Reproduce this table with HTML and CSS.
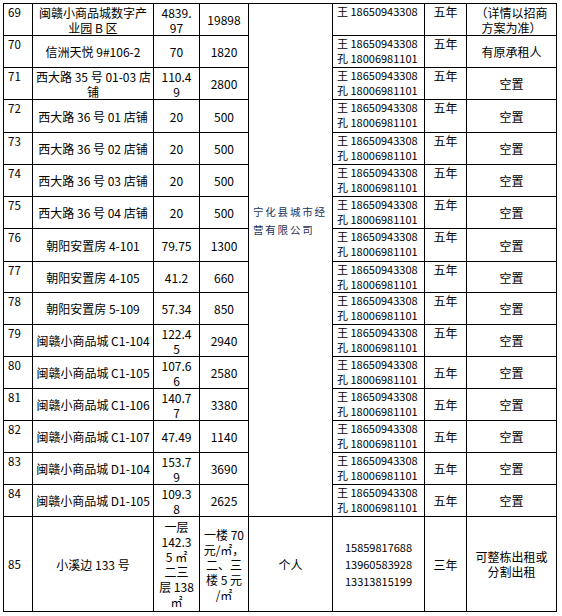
FILE: index.html
```html
<!DOCTYPE html>
<html lang="zh-CN">
<head>
<meta charset="utf-8">
<title>招商表</title>
<link rel="stylesheet" href="styles.css">
</head>
<body>
<table class="sheet">
  <colgroup>
    <col class="c-no"><col class="c-name"><col class="c-area"><col class="c-rent"><col class="c-owner"><col class="c-tel"><col class="c-term"><col class="c-note">
  </colgroup>
  <tbody>
    <tr>
      <td class="no">69</td><td class="ctr">闽赣小商品城数字产<br>业园 B 区</td><td class="ctr">4839.<br>97</td><td class="ctr">19898</td>
      <td class="owner" rowspan="16">宁化县城市经营有限公司</td>
      <td class="tel top">王 18650943308</td><td class="term top">五年</td><td class="ctr">（详情以招商<br>方案为准）</td>
    </tr>
    <tr>
      <td class="no">70</td><td class="ctr">信洲天悦 9#106-2</td><td class="ctr">70</td><td class="ctr">1820</td>
      <td class="tel">王 18650943308<br>孔 18006981101</td><td class="term top">五年</td><td class="ctr">有原承租人</td>
    </tr>
    <tr>
      <td class="no">71</td><td class="ctr">西大路 35 号 01-03 店<br>铺</td><td class="ctr">110.4<br>9</td><td class="ctr">2800</td>
      <td class="tel">王 18650943308<br>孔 18006981101</td><td class="term top">五年</td><td class="ctr">空置</td>
    </tr>
    <tr class="r33">
      <td class="no">72</td><td class="ctr">西大路 36 号 01 店铺</td><td class="ctr">20</td><td class="ctr">500</td>
      <td class="tel">王 18650943308<br>孔 18006981101</td><td class="term top">五年</td><td class="ctr">空置</td>
    </tr>
    <tr>
      <td class="no">73</td><td class="ctr">西大路 36 号 02 店铺</td><td class="ctr">20</td><td class="ctr">500</td>
      <td class="tel">王 18650943308<br>孔 18006981101</td><td class="term top">五年</td><td class="ctr">空置</td>
    </tr>
    <tr>
      <td class="no">74</td><td class="ctr">西大路 36 号 03 店铺</td><td class="ctr">20</td><td class="ctr">500</td>
      <td class="tel">王 18650943308<br>孔 18006981101</td><td class="term top">五年</td><td class="ctr">空置</td>
    </tr>
    <tr>
      <td class="no">75</td><td class="ctr">西大路 36 号 04 店铺</td><td class="ctr">20</td><td class="ctr">500</td>
      <td class="tel">王 18650943308<br>孔 18006981101</td><td class="term top">五年</td><td class="ctr">空置</td>
    </tr>
    <tr class="r33">
      <td class="no">76</td><td class="ctr">朝阳安置房 4-101</td><td class="ctr">79.75</td><td class="ctr">1300</td>
      <td class="tel">王 18650943308<br>孔 18006981101</td><td class="term top">五年</td><td class="ctr">空置</td>
    </tr>
    <tr class="r31">
      <td class="no">77</td><td class="ctr">朝阳安置房 4-105</td><td class="ctr">41.2</td><td class="ctr">660</td>
      <td class="tel">王 18650943308<br>孔 18006981101</td><td class="term top">五年</td><td class="ctr">空置</td>
    </tr>
    <tr>
      <td class="no">78</td><td class="ctr">朝阳安置房 5-109</td><td class="ctr">57.34</td><td class="ctr">850</td>
      <td class="tel">王 18650943308<br>孔 18006981101</td><td class="term top">五年</td><td class="ctr">空置</td>
    </tr>
    <tr>
      <td class="no">79</td><td class="ctr">闽赣小商品城 C1-104</td><td class="ctr">122.4<br>5</td><td class="ctr">2940</td>
      <td class="tel">王 18650943308<br>孔 18006981101</td><td class="term top">五年</td><td class="ctr">空置</td>
    </tr>
    <tr>
      <td class="no">80</td><td class="ctr">闽赣小商品城 C1-105</td><td class="ctr">107.6<br>6</td><td class="ctr">2580</td>
      <td class="tel">王 18650943308<br>孔 18006981101</td><td class="term">五年</td><td class="ctr">空置</td>
    </tr>
    <tr>
      <td class="no">81</td><td class="ctr">闽赣小商品城 C1-106</td><td class="ctr">140.7<br>7</td><td class="ctr">3380</td>
      <td class="tel">王 18650943308<br>孔 18006981101</td><td class="term">五年</td><td class="ctr">空置</td>
    </tr>
    <tr>
      <td class="no">82</td><td class="ctr">闽赣小商品城 C1-107</td><td class="ctr">47.49</td><td class="ctr">1140</td>
      <td class="tel">王 18650943308<br>孔 18006981101</td><td class="term">五年</td><td class="ctr">空置</td>
    </tr>
    <tr>
      <td class="no">83</td><td class="ctr">闽赣小商品城 D1-104</td><td class="ctr">153.7<br>9</td><td class="ctr">3690</td>
      <td class="tel">王 18650943308<br>孔 18006981101</td><td class="term">五年</td><td class="ctr">空置</td>
    </tr>
    <tr>
      <td class="no">84</td><td class="ctr">闽赣小商品城 D1-105</td><td class="ctr">109.3<br>8</td><td class="ctr">2625</td>
      <td class="tel">王 18650943308<br>孔 18006981101</td><td class="term">五年</td><td class="ctr">空置</td>
    </tr>
    <tr class="r95">
      <td class="no mid">85</td><td class="ctr">小溪边 133 号</td>
      <td class="ctr tight">一层<br>142.3<br>5 ㎡<br>二三<br>层 138<br>㎡</td>
      <td class="ctr tight">一楼 70<br>元/㎡，<br>二、三<br>楼 5 元<br>/㎡</td>
      <td class="ctr">个人</td>
      <td class="ctr tel-c">15859817688<br>13960583928<br>13313815199</td>
      <td class="ctr">三年</td>
      <td class="ctr">可整栋出租或<br>分割出租</td>
    </tr>
  </tbody>
</table>
</body>
</html>
```

FILE: styles.css
```css
html, body {
  margin: 0;
  padding: 0;
  background: #ffffff;
}

body {
  padding: 3px 0 0 3px;
  font-family: "Noto Sans CJK SC", "Liberation Sans", sans-serif;
  font-size: 12px;
  color: #000000;
}

.sheet {
  border-collapse: collapse;
  table-layout: fixed;
  width: 554px;
}

.c-no { width: 29px; }
.c-name { width: 121px; }
.c-area { width: 46px; }
.c-rent { width: 49px; }
.c-owner { width: 84px; }
.c-tel { width: 92px; }
.c-term { width: 42px; }
.c-note { width: 90px; }

.sheet tr { height: 32px; }
.sheet tr.r33 { height: 33px; }
.sheet tr.r31 { height: 31px; }
.sheet tr.r95 { height: 95px; }

.sheet td {
  border: 1px solid #000000;
  padding: 0 3px;
  line-height: 15px;
  white-space: nowrap;
  overflow: hidden;
  vertical-align: middle;
}

.sheet td.no {
  vertical-align: top;
  padding-left: 4px;
  padding-top: 1px;
  font-size: 11.5px;
}

.sheet td.no.mid {
  vertical-align: middle;
}

.sheet td.ctr {
  text-align: center;
}

.sheet td.tight {
  line-height: 15px;
  padding: 0;
}

.sheet td.tel {
  vertical-align: top;
  font-size: 11px;
  padding-left: 4px;
  padding-right: 0;
}

.sheet td.tel-c {
  font-size: 11px;
  line-height: 17px;
}

.sheet td.term {
  text-align: center;
}

.sheet td.top {
  vertical-align: top;
}

.sheet td.owner {
  vertical-align: top;
  padding: 199px 2px 0 4px;
  white-space: normal;
  font-size: 10.5px;
  letter-spacing: 1.8px;
  line-height: 18px;
  color: #24325a;
}
```
